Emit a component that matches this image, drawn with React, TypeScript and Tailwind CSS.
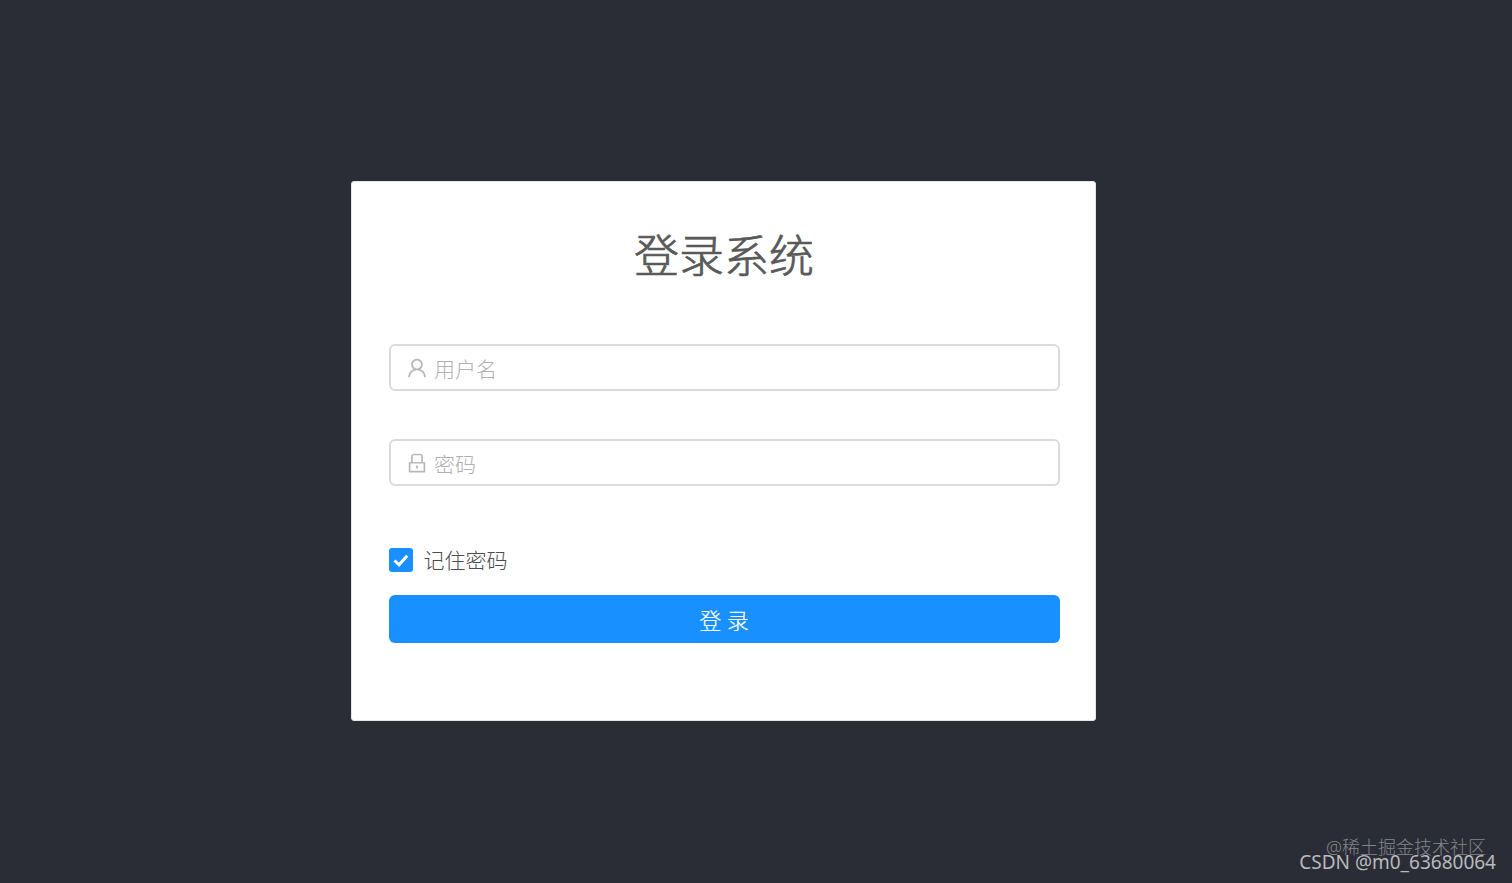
import { useState, type FormEvent, type ReactNode } from "react";
import { AiOutlineLock, AiOutlineUser } from "react-icons/ai";

interface LoginFieldProps {
  icon: ReactNode;
  type: string;
  placeholder: string;
  value: string;
  onChange: (value: string) => void;
}

function LoginField({ icon, type, placeholder, value, onChange }: LoginFieldProps) {
  return (
    <label className="flex h-[47px] items-center rounded-md border-2 border-[#dbdbdb] bg-white pl-[14.5px] pr-4 text-[#b8b8b8]">
      {icon}
      <input
        type={type}
        value={value}
        placeholder={placeholder}
        onChange={(e) => onChange(e.target.value)}
        className="ml-[5px] min-w-0 flex-1 pt-[3px] text-[21px] leading-8 font-light text-[#595959] outline-none placeholder:text-[#b0b0b0]"
      />
    </label>
  );
}

export default function App() {
  const [username, setUsername] = useState("");
  const [password, setPassword] = useState("");
  const [remember, setRemember] = useState(true);

  const handleSubmit = (e: FormEvent) => {
    e.preventDefault();
  };

  return (
    <div className="relative h-screen overflow-hidden bg-[#2a2d36] pl-[351px] pt-[181px] font-['Noto_Sans','Noto_Sans_CJK_SC',sans-serif]">
      <form
        onSubmit={handleSubmit}
        className="flex h-[540px] w-[745px] flex-col rounded-[3px] border border-[#e4e5e7] bg-white pr-[35.5px] pl-[36.5px]"
      >
        <h1 className="mt-[44px] text-center text-[45px] leading-[60px] font-light text-[#595959] [-webkit-text-stroke:0.7px_#595959]">
          登录系统
        </h1>

        <div className="mt-[58px] flex flex-col gap-12">
          <LoginField
            icon={<AiOutlineUser className="size-6 shrink-0" />}
            type="text"
            placeholder="用户名"
            value={username}
            onChange={setUsername}
          />
          <LoginField
            icon={<AiOutlineLock className="size-6 shrink-0" />}
            type="password"
            placeholder="密码"
            value={password}
            onChange={setPassword}
          />
        </div>

        <label className="mt-[58px] flex h-8 items-center self-start text-[21px] font-light text-[#4c4c4c]">
          <input
            type="checkbox"
            checked={remember}
            onChange={(e) => setRemember(e.target.checked)}
            className="peer sr-only"
          />
          <span className="flex size-6 items-center justify-center rounded-[3px] border-2 border-[#d9d9d9] peer-checked:border-[#1890ff] peer-checked:bg-[#1890ff]">
            {remember && (
              <svg viewBox="0 0 16 14" className="h-3.5 w-4" fill="none" stroke="white" strokeWidth="3">
                <path d="M1.5 7.5 6 11.8 14.2 2.8" />
              </svg>
            )}
          </span>
          <span className="ml-[11px] pt-0.5">记住密码</span>
        </label>

        <button
          type="submit"
          className="mt-[19px] h-12 rounded-md bg-[#1890ff] pt-0.5 text-[22px] font-light text-white [-webkit-text-stroke:0.2px_white]"
        >
          登 录
        </button>
      </form>

      <div className="absolute right-[26px] top-[835px] text-[18px] leading-6 font-light text-[#84868a]">
        @稀土掘金技术社区
      </div>
      <div className="absolute right-[16px] top-[850px] text-[19px] leading-6 font-normal text-[#b9babd]">
        CSDN @m0_63680064
      </div>
    </div>
  );
}
